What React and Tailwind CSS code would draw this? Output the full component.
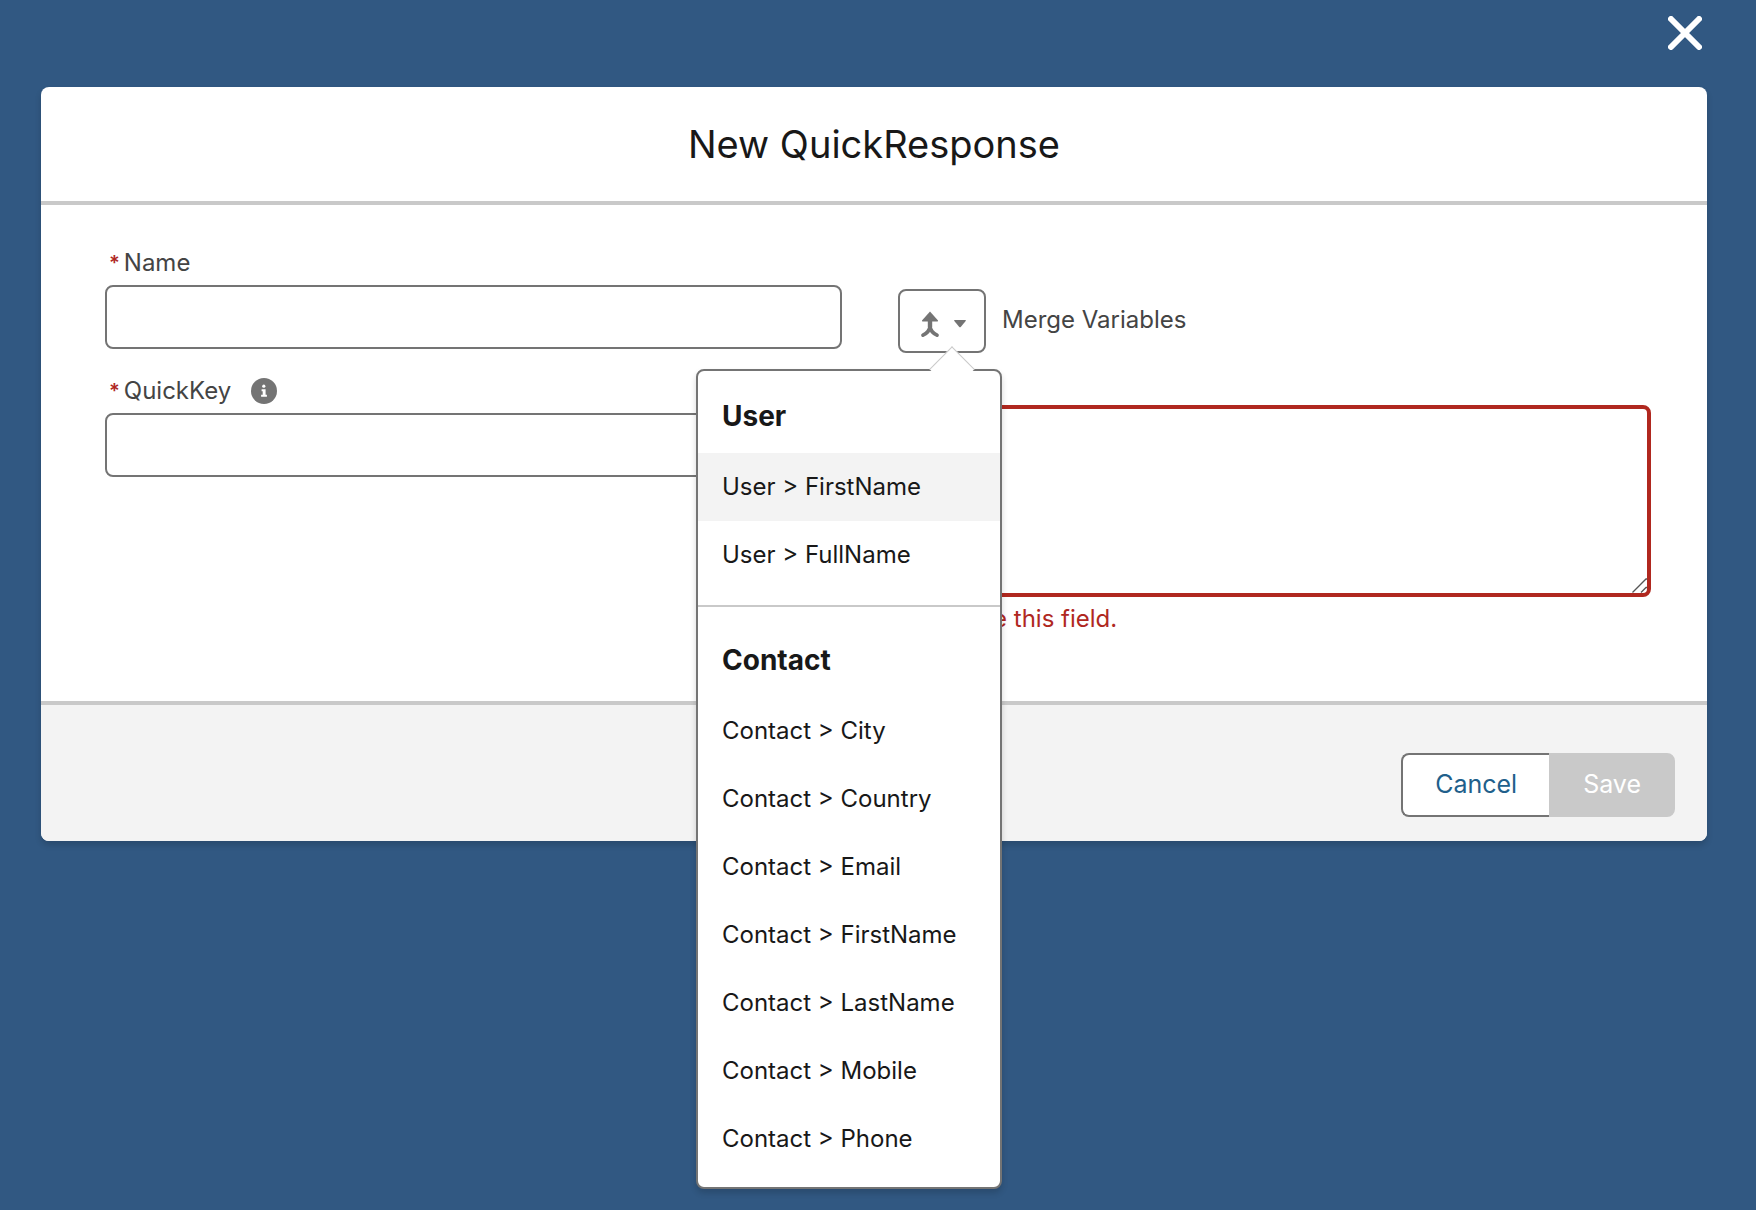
import React, { useState } from 'react';

const groups = [
    { title: 'User', fields: ['FirstName', 'FullName'] },
    { title: 'Contact', fields: ['City', 'Country', 'Email', 'FirstName', 'LastName', 'Mobile', 'Phone'] },
];

const inputClass = 'block w-full h-16 mt-2 px-6 bg-white border-2 border-[#747474] rounded-lg text-2xl text-[#181818] outline-none';

const Required = () => <abbr title="required" className="mr-1 text-xl leading-7 font-semibold text-[#b0281f] no-underline">*</abbr>;

const MergeMenu = ({ active, onHover, onPick }) => (
    <div
        role="menu"
        aria-label="Merge Variables"
        className="absolute top-full -right-4 z-10 mt-4 w-[306px] pt-2 pb-[14px] bg-white border-2 border-[#747474] rounded-lg shadow-[0_4px_6px_rgba(0,0,0,0.16)]"
    >
        {/* pointer towards the button */}
        <span className="absolute -top-[18px] right-8 w-8 h-8 rotate-45 bg-white border-t border-l border-[#c9c9c9]"></span>
        {groups.map((group, i) => (
            <div
                key={group.title}
                role="group"
                aria-label={group.title}
                className={i > 0 ? 'relative mt-4 pt-4 border-t-2 border-[#c9c9c9]' : 'relative'}
            >
                <h3 className="px-6 py-4 text-[28px] leading-[42px] font-bold">{group.title}</h3>
                {group.fields.map((field) => {
                    const value = `${group.title} > ${field}`;
                    return (
                        <button
                            key={value}
                            type="button"
                            role="menuitem"
                            onMouseEnter={() => onHover(value)}
                            onClick={() => onPick(`{!${group.title}.${field}}`)}
                            className={`block w-full px-6 py-4 text-left text-2xl leading-9 whitespace-nowrap ${active === value ? 'bg-[#f3f3f3]' : ''}`}
                        >
                            {value}
                        </button>
                    );
                })}
            </div>
        ))}
    </div>
);

const App = () => {
    const [name, setName] = useState('');
    const [quickKey, setQuickKey] = useState('');
    const [message, setMessage] = useState('');
    const [menuOpen, setMenuOpen] = useState(true);
    const [active, setActive] = useState('User > FirstName');

    const handlePick = (token) => {
        setMessage(message + token);
        setMenuOpen(false);
    };

    return (
        <div className="min-h-screen bg-[#315882] font-['Inter',sans-serif] text-[#181818]">
            <div className="flex justify-end pt-4 pb-[37px] pr-[54px]">
                <button type="button" aria-label="Close" className="text-white">
                    <svg className="block w-[34px] h-[34px]" viewBox="0 0 34 34" fill="none" stroke="currentColor" strokeWidth="6" strokeLinecap="round">
                        <path d="M3 3l28 28M31 3L3 31" />
                    </svg>
                </button>
            </div>

            <form
                role="dialog"
                aria-labelledby="modal-title"
                onSubmit={(e) => e.preventDefault()}
                className="ml-[41px] mr-[49px] rounded-lg bg-white shadow-[0_4px_6px_rgba(0,0,0,0.16)]"
            >
                <header className="py-8 border-b-4 border-[#c9c9c9] text-center">
                    <h2 id="modal-title" className="text-[38px] leading-[50px]">New QuickResponse</h2>
                </header>

                <div className="grid grid-cols-2 gap-14 pt-11 pb-16 pl-12 pr-14">
                    <div className="pl-4">
                        <label htmlFor="name" className="flex pl-1 text-2xl leading-7 text-[#444444]">
                            <Required />Name
                        </label>
                        <input id="name" type="text" value={name} onChange={(e) => setName(e.target.value)} className={inputClass} />

                        <div className="flex items-center mt-7">
                            <label htmlFor="quickkey" className="flex pl-1 text-2xl leading-7 text-[#444444]">
                                <Required />QuickKey
                            </label>
                            <button type="button" aria-label="Help" className="ml-5 text-[#747474]">
                                <svg className="block w-[26px] h-[26px]" viewBox="0 0 26 26">
                                    <circle cx="13" cy="13" r="13" fill="currentColor" />
                                    <circle cx="12.8" cy="8.2" r="1.6" fill="#fff" />
                                    <path d="M10.6 11.2h4v5.6h1.3v2h-5.8v-2h1.6v-3.6h-1.1z" fill="#fff" />
                                </svg>
                            </button>
                        </div>
                        <input id="quickkey" type="text" value={quickKey} onChange={(e) => setQuickKey(e.target.value)} className={inputClass} />
                    </div>

                    <div className="pt-10">
                        <div className="flex items-center">
                            <div className="relative">
                                <button
                                    id="merge"
                                    type="button"
                                    aria-haspopup="menu"
                                    aria-expanded={menuOpen}
                                    onClick={() => setMenuOpen(!menuOpen)}
                                    className="flex items-center justify-center gap-[14px] w-[88px] h-16 pt-1.5 pl-0.5 border-2 border-[#747474] rounded-lg text-[#747474]"
                                >
                                    <svg className="w-[20px] h-[26px]" viewBox="0 0 20 26" fill="none" stroke="currentColor" strokeLinecap="round">
                                        <path d="M10 .4L18 9.4Q18.4 10.4 17.2 10.4H2.8Q1.6 10.4 2 9.4z" fill="currentColor" stroke="none" />
                                        <path d="M10 9v7" strokeWidth="4.4" />
                                        <path d="M10 15.5C9.6 19.5 6.5 22.500 3 24.200M10 15.500C10.400 19.500 13.500 22.500 17 24.200" strokeWidth="3.6" />
                                    </svg>
                                    <svg className="w-[12px] h-[8px]" viewBox="0 0 12 8" fill="currentColor">
                                        <path d="M.6 0h10.800q.8.200.3 1L6.700 7q-.7.700-1.400 0L.3 1Q-.2.200.6 0z" />
                                    </svg>
                                </button>
                                {menuOpen && <MergeMenu active={active} onHover={setActive} onPick={handlePick} />}
                            </div>
                            <label htmlFor="merge" className="ml-4 pb-0.5 text-2xl leading-8 text-[#444444]">Merge Variables</label>
                        </div>

                        <div className="relative mt-[52px]">
                            <textarea
                                aria-label="Message"
                                aria-invalid="true"
                                aria-describedby="message-error"
                                value={message}
                                onChange={(e) => setMessage(e.target.value)}
                                className="block w-full h-48 px-6 py-4 resize-none bg-white border-4 border-[#b0281f] rounded-lg text-2xl outline-none"
                            />
                            <svg className="absolute right-1 bottom-1 w-4 h-4" viewBox="0 0 16 16" fill="none" stroke="#555" strokeWidth="1.3">
                                <path d="M1.5 15.5L15 2H16M10 15.5L15 10.5H16" />
                            </svg>
                        </div>
                        <p id="message-error" className="mt-1 text-2xl leading-9 text-[#b0281f]">Complete this field.</p>
                    </div>
                </div>

                <footer className="flex justify-end pt-12 pb-6 px-8 rounded-b-lg border-t-4 border-[#c9c9c9] bg-[#f3f3f3] text-[25px]">
                    <button type="button" className="h-16 px-8 bg-white border-2 border-r-0 border-[#747474] rounded-l-lg text-[#215f8b]">Cancel</button>
                    <button type="submit" disabled className="h-16 px-8 bg-[#c9c9c9] border-2 border-[#c9c9c9] rounded-r-lg text-white">Save</button>
                </footer>
            </form>
        </div>
    );
};

export default App;
